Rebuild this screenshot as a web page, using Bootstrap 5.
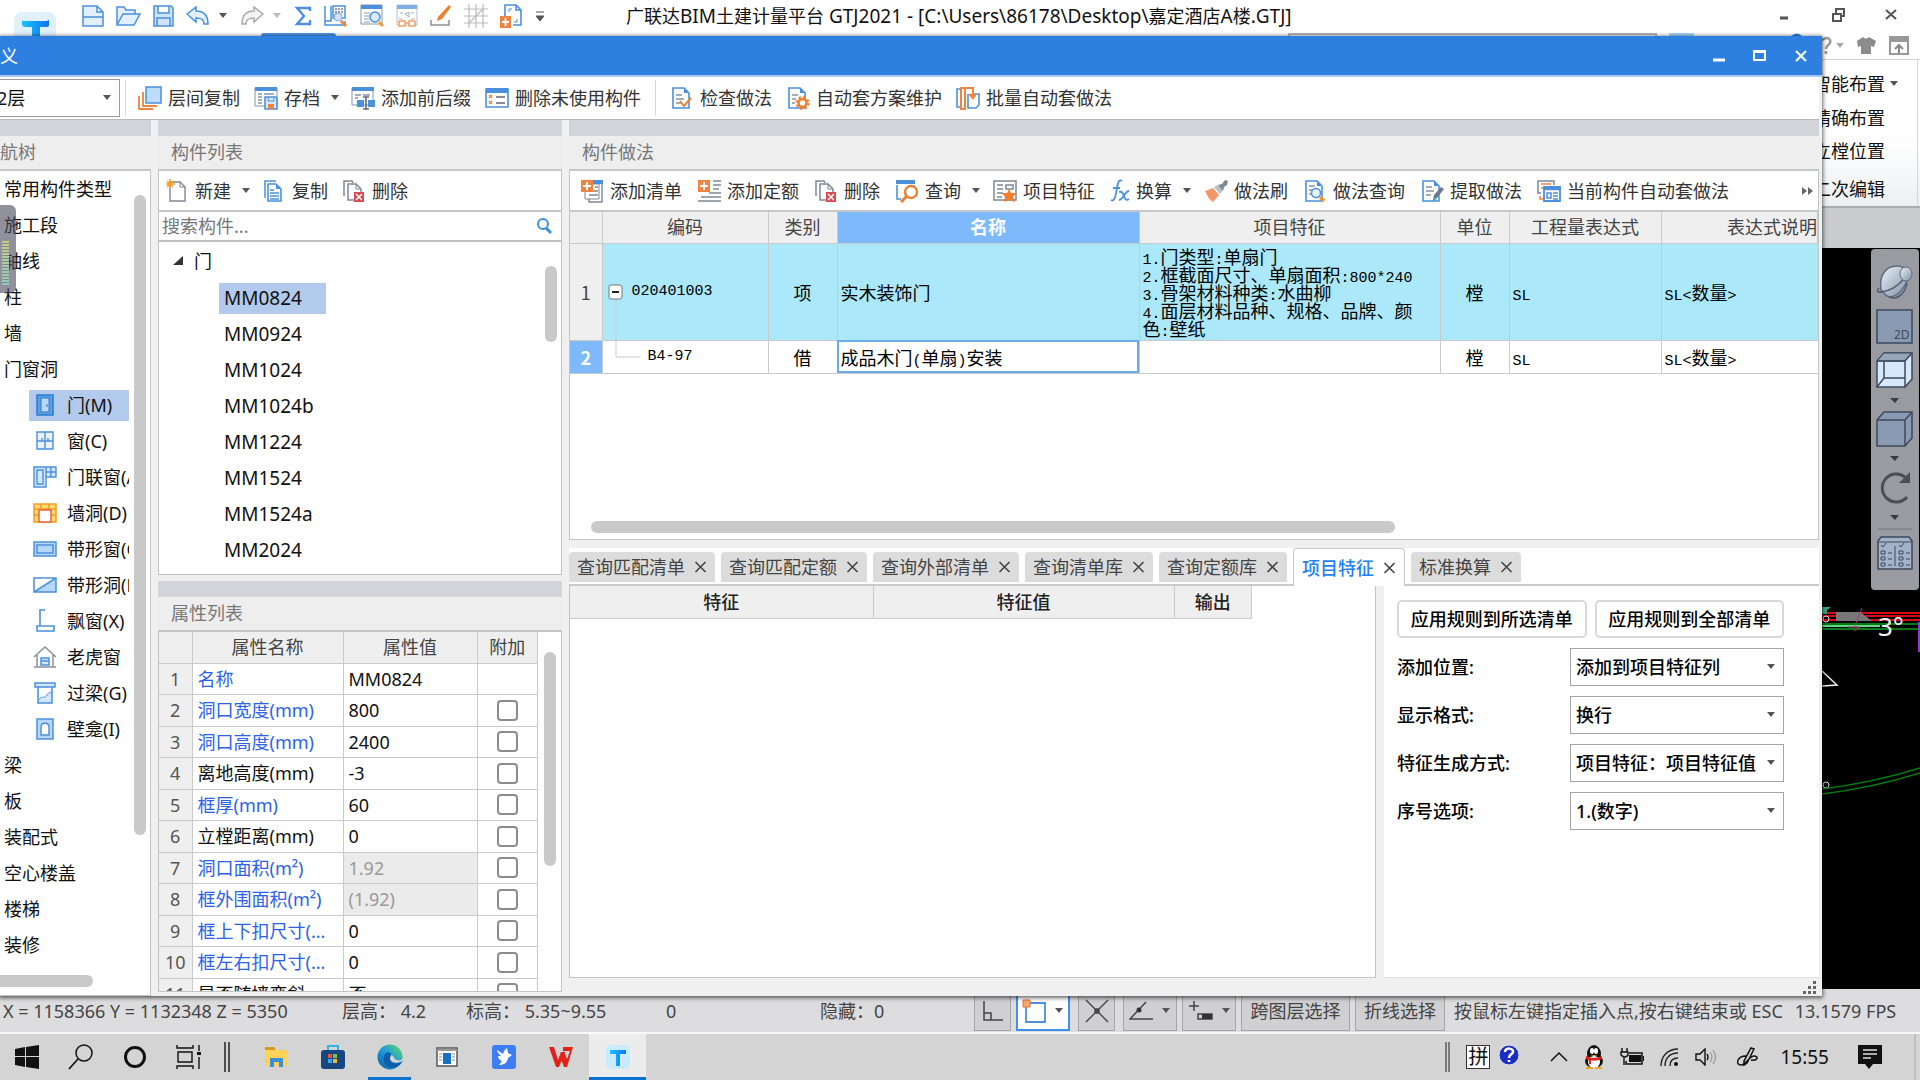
<!DOCTYPE html>
<html lang="zh-CN">
<head>
<meta charset="utf-8">
<meta name="viewport" content="width=device-width, initial-scale=1">
<title>广联达BIM土建计量平台 GTJ2021</title>
<link rel="stylesheet" href="https://cdn.jsdelivr.net/npm/bootstrap@5.3.0/dist/css/bootstrap.min.css">
<style>
:root{--line:#c3c4c6;--face:#efefef;--band:#d2d4d9;--sel:#b2caeb;--thumb:#c9c9c9;--blue:#2d7fe0}
body{font-family:"Noto Sans","Noto Sans CJK SC",sans-serif;font-size:18px;line-height:24px;color:#111;height:100vh;overflow:hidden;background:#000}
svg{display:block;flex:none}
button{font:inherit;color:inherit;background:none;border:0;padding:0}
ul{list-style:none;margin:0;padding:0}
.minw{min-width:0}.minh{min-height:0}
/* main window */
.app-top{height:60px;background:#fff;border-bottom:1px solid #d0d0d0}
.app-title{left:626px;top:4px;font-size:18px;white-space:nowrap}
.app-title span{font-size:19px}
.quick{padding-left:82px;height:31px;gap:12px}
.app-logo{left:14px;top:12px}
.ribbon-tab{left:261px;top:33px;width:75px;height:8px;background:#4d95e2;border-radius:3px}
.ribbon{height:148px;background:linear-gradient(#fff,#fdfdfd 60%,#eceff1);border-bottom:2px solid #a9abb0}
.ribbon-group{width:109px;margin-right:2px;padding-top:7px;border-right:1px solid #d5d8db}
.ribbon-group button{height:35px;white-space:nowrap;padding-left:4px}
.optionbar{height:40px;background:#c9cbcf}
.canvas{background:#000}
.viewtools{width:48px;top:1px;right:1px;height:341px;background:#999ba1;border-radius:4px;padding-top:15px}
/* dialog */
.dlg{left:0;right:98px;top:36px;bottom:84px;background:#f0f0f0;box-shadow:0 1px 4px 1px rgba(0,0,0,.6);z-index:5;overflow:hidden}
.dlg-title{height:41px;background:var(--blue);color:#fff;border-bottom:2px solid #a8c8f0}
.dlg-controls{gap:27px;padding-right:14px}
.dlg-body{padding-right:3px}
.tools{gap:14px;background:#fff;color:#333;white-space:nowrap}
.tools button{display:flex;align-items:center;gap:6px}
.tools .drop{margin:0 -3px 0 4px}
.main-tools{height:43px;border-bottom:1px solid #b9babd}
.floor{width:123px;height:38px;border:1px solid #9a9a9a;border-left:0;border-radius:0;padding:0;margin-left:-3px;margin-right:3px;font-size:18px;line-height:24px;color:#111;background-color:#fff;background-position:right 7px center;background-size:10px 6px}
.vsep{width:1px;height:36px;background:#d8d8d8}
.vsep.first{margin:0 -2px 0 -12px}
.caret{background-image:url("data:image/svg+xml,%3Csvg xmlns='http://www.w3.org/2000/svg' viewBox='0 0 10 6'%3E%3Cpath d='M1 0h8L5 5z' fill='%23555'/%3E%3C/svg%3E")}
.band{height:16px;background:var(--band)}
.band.lower{margin-top:6px}
.pane-head{height:35px;background:#eee;color:#777;border-bottom:2px solid #c6c7c9;line-height:33px;padding-left:13px}
.pane{border:1px solid var(--line);border-top:0;background:#fff}
.col-nav{width:151px}
.col-list{width:404px;margin:0 7px}
.pane-tools{height:41px;border-bottom:2px solid #c6c7c9;padding-left:6px}
.right-tools{gap:15px;padding-left:10px}
.navtree li{height:36px;padding-left:4px;white-space:nowrap;display:flex;align-items:center}
.navtree .sub{padding-left:29px}
.navtree .sub button{width:100px;height:31px;overflow:hidden;display:flex;align-items:center;gap:10px;padding-left:4px}
.picked{background:var(--sel)}
.thumb-v{width:12px;border-radius:6px;background:var(--thumb)}
.thumb-h{height:12px;border-radius:6px;background:var(--thumb)}
.find{height:30px;border-bottom:2px solid #c0c1c3}
.find input{border:0;outline:0;background:none;padding:0 3px;font-size:18px;width:340px}
.find input::placeholder{color:#777;opacity:1}
.list-pane{height:363px}
.root-item{height:38px;gap:10px;padding-left:13px}
.items li{height:36px;display:flex;align-items:center;padding-left:60px;font-size:19px}
.items button{padding:0 5px;height:31px;min-width:107px;text-align:left}
.grid{table-layout:fixed;border-collapse:collapse;width:100%}
.grid th{background:var(--face);font-weight:400;color:#444;text-align:center}
.grid th,.grid td{border:1px solid #c9cacc;border-top:0;padding:0;white-space:nowrap;overflow:hidden}
.grid tr>:first-child{border-left:0}
.props tr{height:31px}.props tbody tr:nth-child(even){height:32px}
.props td{padding-left:5px;line-height:24px}
.props tbody th{color:#555}
.props .tick{padding:0;text-align:center}
.props .k{color:#2b62e8;text-overflow:ellipsis}.props .off{background:#ebebeb;color:#999}
.props input{display:block;appearance:none;width:21px;height:21px;margin:0 auto;border:2px solid #8c8c8c;border-radius:4px;background:#fff}
.bill{font-family:"Noto Sans CJK SC",sans-serif;color:#000}
.bill thead th{height:31px;font-family:"Noto Sans","Noto Sans CJK SC",sans-serif}
.bill td{padding-left:3px;line-height:18px}
.bill .lat{font-family:"Liberation Mono",monospace;font-size:15px;line-height:1px}
.bill .line1{height:97px}.bill .line1 td{background:#abe8fa}
.bill .line2{height:33px}
.bill thead .hot,.bill tbody .hot{background:#7db9fb;color:#fff;font-weight:700}
.bill .editing{outline:2px solid #6aa9ea;outline-offset:-2px}
.bill-pane{height:328px}
.bill-thumb{width:804px;margin:0 0 6px 21px}
.tabs{height:38px;gap:6px;margin-top:8px;border-bottom:2px solid #c8c9cb;background:#fff}
.tabs button{height:30px;margin-bottom:2px;padding:0 8px;background:#dcdcdc;color:#444;border-radius:4px 4px 0 0;display:flex;align-items:center;gap:9px;white-space:nowrap}
.tabs .now{height:38px;margin-bottom:-2px;background:#fff;color:#2381f0;border:1px solid #c8c9cb;border-bottom:0;font-weight:500}
.feature thead th{height:32px;font-weight:500;color:#222}
.feature{width:682px}
.form-side{width:435px;padding:14px 35px 0 13px;font-weight:500;color:#000}
.form-side .apply{height:38px;border:2px solid #d8d8d8;border-radius:5px;flex:1}
.form-side .pick{width:214px;height:38px;border:1px solid #a5a5a5;border-radius:0;padding:0 20px 0 5px;font-size:18px;font-weight:500;color:#000;background-color:#fff;background-position:right 7px center;background-size:10px 6px}
.form-rows{gap:10px;margin-top:10px}
.grip{height:18px}
/* status bar and taskbar */
.status{height:45px;background:#dddddf;color:#444;border-bottom:2px solid #f8f8f8;white-space:nowrap;padding-left:3px}
.status button{height:41px;border:1px solid #a5a5a5;background:#d0d0d2;margin-right:5px;display:flex;align-items:center;justify-content:center;gap:8px}
.status .on{background:#fff;border:2px solid #3d92ee}
.s-xyz{width:339px}.s-floor{width:124px}.s-level{width:200px}.s-num{width:154px}.s-hid{width:154px}
.status .b-one{width:37px}.status .b-two{width:54px}.status .b-layer{width:109px}.status .b-line{width:90px}
.taskbar{height:46px;background:#d4d4d4;color:#111}
.tb{width:57px;height:46px;display:flex;align-items:center;justify-content:center;position:relative}
.tb.nar{width:54px}
.tb.live{background:#ececec}
.tb.live::after,.tb.run::after{content:"";position:absolute;bottom:0;left:7px;right:7px;height:3px;background:#0f72cf}
.tb.live::after{left:0;right:0}
.tray{gap:16px;padding-right:4px}
.help{margin:-4px 14px 0 -8px}
.ime{width:24px;height:24px;border:1px solid #333;background:#fff;font-size:20px;line-height:21px;text-align:center}
.clock{font-size:19px;margin:0 13px 0 5px}
.handle{left:0;top:169px;width:16px;height:88px;background:rgba(70,72,90,.6);border-radius:0 6px 6px 0;padding:36px 7px 8px 2px}
.handle div{height:44px;background:repeating-linear-gradient(transparent 0 2px,#85878f 2px 3px),linear-gradient(#c9cc8a,#8fcbbb)}
</style>
<script src="https://cdn.jsdelivr.net/npm/bootstrap@5.3.0/dist/js/bootstrap.bundle.min.js"></script>
</head>
<body class="d-flex flex-column position-relative">

<svg width="0" height="0" class="position-absolute" aria-hidden="true">
<defs>
<linearGradient id="gT" x1="0" x2="1"><stop offset="0" stop-color="#19c3ff"/><stop offset="1" stop-color="#1173f0"/></linearGradient>
<linearGradient id="gE" x1="0" y1="1" x2="1" y2="0"><stop offset="0" stop-color="#0c59a4"/><stop offset=".5" stop-color="#1c9ade"/><stop offset="1" stop-color="#6bdc5a"/></linearGradient>
<linearGradient id="gS" x1="0" y1="0" x2="1" y2="1"><stop offset="0" stop-color="#eef3f8"/><stop offset="1" stop-color="#7f8fa6"/></linearGradient>
<symbol id="arrow" viewBox="0 0 10 6"><path d="M1 0h8L5 5z" fill="#555"/></symbol>
<symbol id="close" viewBox="0 0 12 12"><path d="M1 1l10 10M11 1L1 11" stroke="currentColor" stroke-width="1.6"/></symbol>
<symbol id="layers" viewBox="0 0 24 24"><path d="M8 1h15v16H8z" fill="#bedcfb" stroke="#4b90dc" stroke-width="1.5"/><path d="M5 6v14h14M1 10v13h14" fill="none" stroke="#ee8440" stroke-width="1.8"/></symbol>
<symbol id="archive" viewBox="0 0 24 24"><path d="M1 2h22v18H1z" fill="#fff" stroke="#8494a5"/><path d="M1 1h22v4H1z" fill="#4b90dc"/><path d="M4 8h4M4 11h4M4 14h4M4 17h4M10 8h10" stroke="#8494a5" stroke-width="1.4"/><path d="M11 11h11l1 1v11H11z" fill="#d8eafe" stroke="#4b90dc" stroke-width="1.6"/><path d="M14 11v4h6v-4" fill="none" stroke="#4b90dc"/><path d="M14 18h6v5h-6z" fill="#ee8440"/></symbol>
<symbol id="affix" viewBox="0 0 24 24"><path d="M1 2h21v17H1z" fill="#fff" stroke="#8494a5"/><path d="M1 1h22v4H1z" fill="#4b90dc"/><path d="M4 9h6M12 9h7M4 12h3" stroke="#8494a5" stroke-width="1.4"/><path d="M6 14h7v7H6zM17 14h7v7h-7z" fill="#4b90dc"/><path d="M12 11h6M15 11v12M12 23h6" stroke="#5b6b7b" stroke-width="1.6"/></symbol>
<symbol id="unused" viewBox="0 0 24 24"><path d="M1 3h22v18H1z" fill="#fff" stroke="#4b90dc" stroke-width="1.6"/><path d="M1 2h22v5H1z" fill="#4b90dc"/><path d="M4 9l3 3M7 9l-3 3M4 15l3 3M7 15l-3 3" stroke="#ee8440" stroke-width="1.4"/><path d="M11 11h9M11 17h9" stroke="#667" stroke-width="1.6"/></symbol>
<symbol id="doc" viewBox="0 0 24 24"><path d="M3 2h11l5 5v15H3z" fill="#fff" stroke="#4b90dc" stroke-width="1.6"/><path d="M14 2v5h5z" fill="#4b90dc"/></symbol>
<symbol id="doccheck" viewBox="0 0 24 24"><use href="#doc"/><path d="M6 9h6M6 13h8M6 17h5" stroke="#8494a5" stroke-width="1.4"/><path d="M10 15l4 5 7-8" fill="none" stroke="#f07f30" stroke-width="2"/></symbol>
<symbol id="docgear" viewBox="0 0 24 24"><use href="#doc"/><path d="M6 9h6M6 13h4M6 17h3" stroke="#8494a5" stroke-width="1.4"/><circle cx="16.500" cy="17" r="4" fill="#fff" stroke="#f07f30" stroke-width="2.600"/><circle cx="16.500" cy="17" r="6" fill="none" stroke="#f07f30" stroke-width="2" stroke-dasharray="2.400 2.300"/></symbol>
<symbol id="batch" viewBox="0 0 24 24"><path d="M1 3h5v18H1zM14 8h9v11l-3 3h-8V8" fill="#fff" stroke="#4b90dc" stroke-width="1.600"/><path d="M5 2h4v21H5zM9 2h8v8" fill="#fff" stroke="#ee8440" stroke-width="2"/><path d="M12 8h9l-4 6z" fill="#ee8440"/></symbol>
<symbol id="newdoc" viewBox="0 0 24 24"><path d="M5 3h10l5 5v14H5z" fill="#fff" stroke="#7d8894" stroke-width="1.4"/><path d="M15 3v5h5" fill="none" stroke="#7d8894"/><path d="M5 0v9M1 5h9M2 2l6 6M8 2L2 8" stroke="#f0a030" stroke-width="1.5"/></symbol>
<symbol id="copy" viewBox="0 0 24 24"><path d="M3 19V2h11" fill="none" stroke="#4b90dc" stroke-width="1.5"/><path d="M6 5h8l5 5v12H6z" fill="#fff" stroke="#4b90dc" stroke-width="1.600"/><path d="M14 5v5h5z" fill="#4b90dc"/><path d="M8 11h4M8 14h9M8 17h9M8 20h9" stroke="#4b90dc" stroke-width="1.300"/></symbol>
<symbol id="del" viewBox="0 0 24 24"><path d="M2 17V2h8l1 2" fill="none" stroke="#7d8894" stroke-width="1.500"/><path d="M6 5h8l5 5v11H6z" fill="#fff" stroke="#7d8894" stroke-width="1.500"/><path d="M14 5v5h5" fill="none" stroke="#7d8894"/><path d="M12 13h10v10H12z" fill="#d9484c"/><path d="M14 15l6 6M20 15l-6 6" stroke="#fff" stroke-width="1.500"/></symbol>
<symbol id="addlist" viewBox="0 0 24 24"><path d="M5 5h14v15H5z" fill="#fff" stroke="#7d8894"/><path d="M12 1h11v4H12z" fill="#4b90dc"/><path d="M22 5v18H9v-3M9 12h9M9 16h9M15 8h3" fill="none" stroke="#7d8894" stroke-width="1.400"/><path d="M1 1h12v12H1z" fill="#ee8440"/><path d="M7 3v8M3 7h8" stroke="#fff" stroke-width="2"/></symbol>
<symbol id="addquota" viewBox="0 0 24 24"><path d="M16 2h8M16 6h8M16 10h6M12 14h12M4 18h20M1 22h23" stroke="#7d8894" stroke-width="1.500"/><path d="M1 1h12v12H1z" fill="#ee8440"/><path d="M7 3v8M3 7h8" stroke="#fff" stroke-width="2"/></symbol>
<symbol id="query" viewBox="0 0 24 24"><path d="M2 6v14h4M19 6v2" fill="none" stroke="#4b90dc" stroke-width="1.600"/><path d="M1 1h19v4H1z" fill="#4b90dc"/><circle cx="16" cy="13" r="6" fill="#fff" stroke="#f07f30" stroke-width="2.400"/><path d="M12 17l-6 6" stroke="#f07f30" stroke-width="3"/></symbol>
<symbol id="feat" viewBox="0 0 24 24"><path d="M1 2h22v19H1z" fill="#fff" stroke="#7d8894" stroke-width="1.500"/><path d="M4 6h6M4 10h6M4 14h6M4 18h5M13 6h7v4h-7z" fill="none" stroke="#7d8894" stroke-width="1.500"/><path d="M16 10l2 4 5 0-3 4 2 5-6-2-5 2 1-5-3-4 5 0z" fill="#f07f30"/></symbol>
<symbol id="fx" viewBox="0 0 20 24"><path d="M12 2c-3-2-4 1-5 7s-2 14-6 12M3 9h7M9 13c3-1 4 1 5 4s2 5 5 3M19 12c-4 0-6 9-10 9" fill="none" stroke="#4b90dc" stroke-width="1.800"/></symbol>
<symbol id="brush" viewBox="0 0 24 24"><path d="M1 12l8-3 6 7-6 7c-3-2-6-6-8-11z" fill="#f6976a"/><path d="M10 8l4-2 5 5-3 4z" fill="#b9c0c7"/><path d="M14 6l4-1 3-4 3 1-1 4-3 2-1 4z" fill="#7d8894"/></symbol>
<symbol id="docfind" viewBox="0 0 24 24"><use href="#doc"/><path d="M6 7h6M6 11h3M6 15h3" stroke="#8494a5" stroke-width="1.400"/><circle cx="13" cy="14" r="4.500" fill="#e5f1ff" stroke="#4b90dc" stroke-width="1.500"/><path d="M17 18l4 4" stroke="#f0962c" stroke-width="3.500"/></symbol>
<symbol id="docpen" viewBox="0 0 24 24"><use href="#doc"/><path d="M6 8h6M6 12h8M6 16h5" stroke="#8494a5" stroke-width="1.400"/><path d="M13 21l1-5 7-8 3 2-7 9z" fill="#687a8c"/><path d="M12 23l2-4 3 1z" fill="#35b3ae"/></symbol>
<symbol id="auto" viewBox="0 0 24 24"><path d="M4 14H1V2h16v4" fill="#fff" stroke="#7d8894" stroke-width="1.500"/><path d="M4 5h10M4 9h3M3 17v3h3" fill="none" stroke="#ee8440" stroke-width="1.500"/><path d="M7 8h16v14H7z" fill="#fff" stroke="#4b90dc" stroke-width="1.800"/><path d="M7 10h16" stroke="#4b90dc" stroke-width="2.500"/><path d="M10 14h4v5h-4zM16 14h5M16 17h5M16 20h5" fill="none" stroke="#4b90dc" stroke-width="1.500"/></symbol>
<symbol id="door" viewBox="0 0 24 24"><path d="M4 2h16v20H4z" fill="#5b9fe6" stroke="#2e7bce" stroke-width="1.500"/><path d="M8 5h8v14H8z" fill="#b9d8f8" stroke="#2e7bce"/><path d="M14 11v3" stroke="#2e7bce"/></symbol>
<symbol id="win" viewBox="0 0 24 24"><path d="M4 3h16v17H4zM12 3v17M4 12h16M9 9v3M15 9v3" fill="#e9f3fe" stroke="#4b90dc" stroke-width="1.400"/></symbol>
<symbol id="doorwin" viewBox="0 0 24 24"><path d="M1 2h12v20H1zM13 2h10v10H13zM18 2v10M13 7h10M4 5h6v14H4z" fill="#d3e7fc" stroke="#4b90dc" stroke-width="1.400"/></symbol>
<symbol id="hole" viewBox="0 0 24 24"><path d="M1 3h22v18H1z" fill="#ffd77b" stroke="#f0a020" stroke-width="1.500"/><path d="M1 8h22M8 3v5M16 3v5M1 14h5M18 14h5" stroke="#f0a020" stroke-width="1.500"/><path d="M6 9h12v12H6z" fill="#fff" stroke="#e8653a" stroke-width="1.500"/></symbol>
<symbol id="strip" viewBox="0 0 24 24"><path d="M1 5h22v14H1zM4 8h16v8H4z" fill="#b7d7f8" stroke="#4b90dc" stroke-width="1.500"/></symbol>
<symbol id="striphole" viewBox="0 0 24 24"><path d="M1 5h22v14H1z" fill="#fff"/><path d="M23 5v14H1z" fill="#b7d7f8"/><path d="M1 5h22v14H1zM1 19L23 5" fill="none" stroke="#4b90dc" stroke-width="1.500"/></symbol>
<symbol id="bay" viewBox="0 0 24 24"><path d="M12 1H7v16M4 17h17v5H4z" fill="none" stroke="#4b90dc" stroke-width="1.600"/></symbol>
<symbol id="dormer" viewBox="0 0 24 24"><path d="M1 12L12 2l11 10M4 10v12M20 10v12M1 22h22" fill="none" stroke="#8c9196" stroke-width="1.500"/><path d="M8 13h8v7H8zM8 16h8" fill="#d3e7fc" stroke="#4b90dc" stroke-width="1.500"/></symbol>
<symbol id="lintel" viewBox="0 0 24 24"><path d="M2 2h20v4H2zM5 6h14v16H5z" fill="#d3e7fc" stroke="#4b90dc" stroke-width="1.500"/><path d="M6 20c2-6 5-1 7-5s3-3 5-4V7H6z" fill="#fff"/><path d="M6 19c2-5 5-1 7-4s3-3 5-4" fill="none" stroke="#4b90dc"/></symbol>
<symbol id="niche" viewBox="0 0 24 24"><path d="M4 2h16v20H4z" fill="#b7d7f8" stroke="#4b90dc" stroke-width="1.500"/><path d="M8 18v-8c0-5 8-5 8 0v8z" fill="#fff" stroke="#4b90dc" stroke-width="1.400"/></symbol>
</defs>
</svg>

<!-- main window -->
<header class="app-top position-relative d-flex justify-content-between">
  <svg class="app-logo position-absolute" width="42" height="30" viewBox="0 0 42 30"><rect width="42" height="42" rx="8" fill="#e1f1fb"/><path d="M8 9q0-1 2 0h23q2-2 2 0v4q0 2-3 2h-6v15h-8V15h-7q-3 0-3-3z" fill="url(#gT)"/></svg>
  <div class="ribbon-tab position-absolute"></div>
  <div class="quick d-flex align-items-center">
    <svg width="22" height="22" viewBox="0 0 22 22"><path d="M1 1h14l6 6v14H1zM15 1v6h6M1 12h20" fill="#e2effd" stroke="#4b90dc" stroke-width="1.500"/></svg>
    <svg width="25" height="22" viewBox="0 0 25 22"><path d="M1 20V2h7l2 3h9v4M1 20l6-11h17l-6 11z" fill="#e2effd" stroke="#4b90dc" stroke-width="1.500"/></svg>
    <svg width="21" height="22" viewBox="0 0 21 22"><path d="M1 1h17l2 2v18H1zM5 1v7h11V1M4 13h13v8H4z" fill="#cfe4fb" stroke="#4b90dc" stroke-width="1.500"/></svg>
    <svg width="24" height="20" viewBox="0 0 24 20"><path d="M1 8l9-7v4c9 0 12 5 12 13h-4c0-5-3-6-8-6v4z" fill="#e2effd" stroke="#4b90dc" stroke-width="1.500"/></svg>
    <svg class="ms-n1" width="6" height="6" viewBox="0 0 6 6" overflow="visible"><path d="M-3 0h8L1 5z" fill="#555"/></svg>
    <svg width="24" height="20" viewBox="0 0 24 20"><path d="M23 8l-9-7v4C5 5 2 10 2 18h4c0-5 3-6 8-6v4z" fill="#f4f4f4" stroke="#aaa" stroke-width="1.500"/></svg>
    <svg width="6" height="6" viewBox="0 0 6 6" overflow="visible"><path d="M-3 0h8L1 5z" fill="#bbb"/></svg>
    <svg width="18" height="20" viewBox="0 0 18 20"><path d="M16 5V2H3l7 8-7 8h13v-4" fill="none" stroke="#4b90dc" stroke-width="2.400"/></svg>
    <svg width="24" height="24" viewBox="0 0 24 24"><path d="M1 2v19h20v-4M1 17h6V2M9 2h12v12H9z" fill="#fff" stroke="#4b90dc" stroke-width="1.500"/><path d="M11 5h8M11 8h8" stroke="#99a" stroke-dasharray="2 1" stroke-width="2"/><circle cx="14" cy="13" r="4" fill="#cfe4fb" stroke="#78a8dd"/><path d="M17 17l5 5" stroke="#ee8440" stroke-width="3"/></svg>
    <svg width="24" height="24" viewBox="0 0 24 24"><path d="M1 1h21v19H1z" fill="#fff" stroke="#8494a5"/><path d="M1 1h21v4H1z" fill="#4b90dc"/><path d="M4 9h6M4 12h5M4 15h5M4 18h6" stroke="#89a"/><circle cx="15" cy="13" r="5" fill="#dcebfc" stroke="#4b90dc" stroke-width="1.500"/><path d="M19 18l4 4" stroke="#f0a030" stroke-width="3"/></svg>
    <svg width="22" height="24" viewBox="0 0 22 24"><path d="M1 1h20v20H1z" fill="#fff" stroke="#b5c0cc"/><path d="M1 1h20v4H1z" fill="#7fb1e8"/><path d="M4 9h3M15 9h3M9 10l4-2v5zM3 14l4 2M19 14l-4 2" fill="none" stroke="#a3afbb"/><path d="M3 17h6v5H3zM13 17h6v5h-6zM9 19h4" fill="#fff" stroke="#f3a36c" stroke-width="1.600"/></svg>
    <svg width="22" height="24" viewBox="0 0 22 24"><path d="M8 13L19 1l2 2-9 12-5 2z" fill="#f07f30"/><path d="M1 16v5h18v-5" fill="none" stroke="#8c9196" stroke-width="1.500"/></svg>
    <svg width="24" height="24" viewBox="0 0 24 24"><path d="M0 5h24M0 12h24M0 19h24M5 0v24M12 0v24M19 0v24M5 19L19 5" stroke="#bbb" stroke-width="1.200" fill="none"/></svg>
    <svg width="23" height="24" viewBox="0 0 23 24"><path d="M5 12V1h11l5 5v15h-8M16 1v5h5" fill="#fff" stroke="#4b90dc" stroke-width="1.600"/><path d="M9 5v3M9 5h3M17 18v-3M17 18h-3" stroke="#4b90dc"/><path d="M0 12h11v12H0z" fill="#ee8440"/><path d="M5.500 14v8M2 18h7" stroke="#fff" stroke-width="1.800"/></svg>
    <svg width="10" height="12" viewBox="0 0 10 12"><path d="M1 2h8M1 6h8L5 11z" fill="#555" stroke="#555"/></svg>
  </div>
  <div class="app-title position-absolute">广联达<span>BIM</span>土建计量平台<span> GTJ2021 - [C:\Users\86178\Desktop\</span>嘉定酒店<span>A</span>楼<span>.GTJ]</span></div>
  <svg width="640" height="60" viewBox="1280 0 640 60"><path d="M1289 50V34h367v16" fill="none" stroke="#b5b5b5" stroke-width="2"/><path d="M1669 33h25v6h-25z" fill="#a8d8fa"/><g fill="none" stroke="#555" stroke-width="2"><path d="M1780 18h8" stroke-width="3"/><path d="M1833 14h8v7h-8zM1836 13V9h8v7h-3M1886 10l10 9M1896 10l-10 9"/></g><path d="M1791 36q6-5 11 0z" fill="#2d7fe0"/><path d="M1822 40q6-4 8 0c2 5-4 4-4 9M1826 51v3" stroke="#999" stroke-width="2.500" fill="none"/><path d="M1836 43h8l-4 5z" fill="#aaa"/><path d="M1857 41l6-4q3 3 6 0l7 4-2 6-3-1v8h-10v-8l-3 1z" fill="#8c8c8c"/><path d="M1890 37h18v17h-18z" fill="none" stroke="#999" stroke-width="2"/><path d="M1890 37h18v5h-18z" fill="#999"/><path d="M1899 53v-8M1895 49l4-4 4 4" fill="none" stroke="#888" stroke-width="2"/></svg>
</header>
<section class="ribbon d-flex justify-content-end">
  <div class="ribbon-group d-flex flex-column align-items-start">
    <button class="d-flex align-items-center gap-1">智能布置<svg width="10" height="6"><use href="#arrow"/></svg></button>
    <button>精确布置</button>
    <button>立樘位置</button>
    <button class="mt-1">二次编辑</button>
  </div>
</section>
<div class="optionbar"></div>
<main class="canvas flex-fill minh position-relative">
  <svg class="position-absolute end-0 top-0" width="98" height="741" viewBox="1822 248 98 741">
    <path d="M1822 613h98M1822 616h98M1822 620h98" stroke="#d40a14" stroke-width="2"/>
    <path d="M1836 612h24l12 9h-36z" fill="#777"/>
    <path d="M1822 624h98M1822 629h98" stroke="#067a12" stroke-width="2"/><path d="M1822 626h58" stroke="#63d884" stroke-width="2"/>
    <path d="M1822 607h9l-4 3v4h-5" fill="#38a97b"/><path d="M1862 608l-8 20M1848 627h12l-6 4" stroke="#a33f76" fill="none"/>
    <circle cx="1826" cy="619" r="3" fill="none" stroke="#ddd"/><circle cx="1826" cy="785" r="3" fill="none" stroke="#ddd"/>
    <path d="M1919 622v30" stroke="#8a3ae0" stroke-width="2"/>
    <path d="M1822 671l15 14-15 1" fill="none" stroke="#eee" stroke-width="1.500"/>
    <path d="M1822 789q50-6 98-21M1822 794q50-6 98-21" fill="none" stroke="#0a7a14" stroke-width="1.500"/>
    <text x="1878" y="636" fill="#f2f2f2" font-size="26" font-family="Noto Sans">3°</text>
  </svg>
  <aside class="viewtools position-absolute">
    <svg width="48" height="326" viewBox="1871 264 48 326" stroke="#3e4a5c" fill="none">
      <path d="M1881 290c-2-14 4-24 16-24 10 0 13 8 9 17s-12 16-19 13z" fill="url(#gS)" stroke="#5c6b80" stroke-width="1.500"/><ellipse cx="1906" cy="274" rx="6" ry="7" fill="url(#gS)" stroke="#5c6b80"/><path d="M1879 288q-4 5 2 4c10-1 16-6 22-12M1889 297c6 3 16-1 18-14" stroke-width="1.500" stroke="#4c5a6e"/>
      <path d="M1877 310h35v33h-35z" fill="#8a9ab2" stroke-width="1.500"/><text x="1894" y="339" font-size="12" fill="#3e4a5c" stroke="none" font-family="Noto Sans">2D</text>
      <path d="M1877 361l7-8h28v26l-7 8h-28z" fill="#d7e8fd" stroke-width="1.500"/><path d="M1877 361l7-8h28l-7 8z" fill="#97a5b9"/><path d="M1905 361v26M1884 362v16h21M1884 378l-7 9M1905 361l7-8M1877 361h28" stroke-width="1.500"/>
      <path d="M1877 420l7-8h28v26l-7 8h-28z" fill="#8a9ab2" stroke-width="1.500"/><path d="M1877 420h28v26M1905 420l7-8" stroke-width="1.500"/>
      <path d="M1890 398h9l-4 5zM1890 456h9l-4 5zM1890 515h9l-4 5z" fill="#333c48" stroke="none"/>
      <path d="M1905 477a14 14 0 1 0 2 20" stroke="#4b4e54" stroke-width="3"/><path d="M1910 472v11h-11z" fill="#4b4e54" stroke="none"/>
      <path d="M1878 529h34" stroke="#777"/>
      <path d="M1878 541l3-4h28l3 4v28h-34z" fill="#a3b2c8" stroke-width="1.500"/><path d="M1878 542h34M1895 546v20M1881 545l2 2 3-4M1899 545l2 2 3-4M1881 551h4v3h-4zM1881 557h4v3h-4zM1881 563h4v3h-4zM1899 551h4v3h-4zM1899 557h4v3h-4zM1899 563h4v3h-4zM1888 553h4M1888 559h4M1888 565h4M1906 553h4M1906 559h4M1906 565h4"/>
    </svg>
  </aside>
</main>
<footer class="status d-flex align-items-center">
  <span class="s-xyz">X = 1158366 Y = 1132348 Z = 5350</span>
  <span class="s-floor">层高： 4.2</span>
  <span class="s-level">标高： 5.35~9.55</span>
  <span class="s-num">0</span>
  <span class="s-hid">隐藏：0</span>
  <button class="b-one" aria-label="正交"><svg width="22" height="22" viewBox="0 0 22 22"><path d="M2 1v19h19M2 13h7v7" fill="none" stroke="#444" stroke-width="1.500"/></svg></button>
  <button class="on b-two me-2" aria-label="捕捉"><svg width="24" height="24" viewBox="0 0 24 24"><path d="M4 4h19v19H4z" fill="none" stroke="#4b8fe0" stroke-width="1.800"/><path d="M1 1h7v7H1z" fill="#f7a873" stroke="#e0772f"/></svg><svg width="10" height="6"><use href="#arrow"/></svg></button>
  <button class="b-one me-2" aria-label="交点"><svg width="24" height="24" viewBox="0 0 24 24"><path d="M1 1l22 22M23 1L1 23M10 10h4v4h-4z" fill="none" stroke="#444" stroke-width="1.400"/></svg></button>
  <button class="b-two" aria-label="角度"><svg width="24" height="22" viewBox="0 0 24 22"><path d="M17 2L1 19h23" fill="none" stroke="#444" stroke-width="1.500"/><circle cx="10" cy="10" r="2.500" fill="#333"/></svg><svg width="10" height="6"><use href="#arrow"/></svg></button>
  <button class="b-two" aria-label="偏移"><svg width="25" height="22" viewBox="0 0 25 22"><path d="M6 1v10M1 6h10M10 14h14v5H10z" fill="none" stroke="#444" stroke-width="1.500"/><path d="M14 14h10v5H14z" fill="#333"/></svg><svg width="10" height="6"><use href="#arrow"/></svg></button>
  <button class="b-layer">跨图层选择</button>
  <button class="b-line">折线选择</button>
  <span class="ps-1">按鼠标左键指定插入点,按右键结束或 ESC</span><span class="ms-2 ps-1">13.1579 FPS</span>
</footer>
<nav class="taskbar d-flex align-items-center">
  <button class="tb nar" aria-label="开始"><svg width="24" height="24" viewBox="0 0 24 24"><path d="M0 4l10-2v9H0zM11 2l13-2v11H11zM0 12h10v10L0 20zM11 12h13v12l-13-2z" fill="#111"/></svg></button>
  <button class="tb nar" aria-label="搜索"><svg width="26" height="26" viewBox="0 0 26 26"><circle cx="16" cy="9" r="8" fill="none" stroke="#111" stroke-width="1.500"/><path d="M10 15L1 25" stroke="#111" stroke-width="1.800"/></svg></button>
  <button class="tb nar" aria-label="助手"><svg width="24" height="24" viewBox="0 0 24 24"><circle cx="12" cy="12" r="9.500" fill="none" stroke="#111" stroke-width="3"/></svg></button>
  <button class="tb nar" aria-label="任务视图"><svg width="26" height="24" viewBox="0 0 26 24"><path d="M1 0v3h16V0M1 24v-3h16v3M2 7h14v10H2zM23 0v6M23 12v12" fill="none" stroke="#111" stroke-width="1.400"/><path d="M21 7h4v3h-4z" fill="#111"/></svg></button>
  <svg width="31" height="30" viewBox="0 0 31 30"><path d="M9 0v30M13 0v30" stroke="#222" stroke-width="1.500"/></svg>
  <button class="tb" aria-label="文件资源管理器"><svg width="24" height="22" viewBox="0 0 24 22"><path d="M1 1h9l2 3h11v16H1z" fill="#ffd35a"/><path d="M1 1h9l2 3H1z" fill="#d9991f"/><path d="M6 21v-9h13v9h-4v-5h-5v5z" fill="#3a8fd8"/></svg></button>
  <button class="tb" aria-label="应用商店"><svg width="24" height="26" viewBox="0 0 24 26"><path d="M7 6V2h10v4" fill="none" stroke="#35b2ea" stroke-width="2"/><rect x="0" y="6" width="24" height="19" rx="3" fill="#17477e"/><path d="M7 10h4v4H7z" fill="#e8553a"/><path d="M12 10h4v4h-4z" fill="#82bd3d"/><path d="M7 15h4v4H7z" fill="#37a6ea"/><path d="M12 15h4v4h-4z" fill="#f4b92c"/></svg></button>
  <button class="tb run" aria-label="浏览器"><svg width="26" height="26" viewBox="0 0 26 26"><circle cx="13" cy="13" r="12.500" fill="url(#gE)"/><path d="M26 16c-3 5-12 4-13-1 0-2 2-3 1-5-2-3-6-2-7 2-2 6 2 11 8 12 5 0 9-3 11-8z" fill="#0f5fa8"/><path d="M25 17c-5 3-12 2-12-3 0-1 1-2 1-3 4 1 3 5 6 5 3 1 5 0 6-2z" fill="#d4d4d4"/></svg></button>
  <button class="tb" aria-label="阅读"><svg width="22" height="20" viewBox="0 0 22 20"><path d="M1 1h20v18H1z" fill="#fff" stroke="#555" stroke-width="1.500"/><path d="M1 2h20v2H1z" fill="#999"/><path d="M7 6h8v11H7z" fill="#1671c4"/><path d="M3 7h3M3 10h3M3 13h3M16 7h3M16 10h3M16 13h3" stroke="#888"/></svg></button>
  <button class="tb" aria-label="飞鸟"><svg width="24" height="24" viewBox="0 0 24 24"><rect width="24" height="24" rx="3" fill="#3d7df6"/><path d="M5 5l6 4c1-3 2-5 4-6l1 5 4 2-4 3c-1 5-4 7-9 7l3-4c-3-1-4-3-4-5l3 0c-2-2-4-4-4-6z" fill="#fff"/></svg></button>
  <button class="tb" aria-label="办公"><svg width="24" height="22" viewBox="0 0 24 22"><path d="M0 1h5l4 13 3-8h4l-6 15H7zM12 13l3-8 3 8 3-8h-7V1h10l-6 20h-3z" fill="#e2231a"/></svg></button>
  <button class="tb live" aria-label="广联达"><svg width="24" height="24" viewBox="0 0 24 24"><rect width="24" height="24" rx="5" fill="#c9ecfd"/><path d="M4 5h16v4h-6v12h-4V9H4z" fill="url(#gT)"/></svg></button>
  <div class="tray ms-auto d-flex align-items-center">
    <svg width="5" height="30"><path d="M1 0v30M4 0v30" stroke="#222"/></svg>
    <div class="ime">拼</div>
    <svg class="help" width="22" height="22" viewBox="0 0 22 22"><circle cx="11" cy="11" r="10" fill="#1a2fc4" stroke="#dfe3f5"/><path d="M7 8c0-5 9-4 8 0-1 3-4 2-4 6M11 16v2" fill="none" stroke="#fff" stroke-width="2.500"/></svg>
    <svg width="18" height="10" viewBox="0 0 18 10"><path d="M1 9l8-8 8 8" fill="none" stroke="#111" stroke-width="1.500"/></svg>
    <svg width="20" height="24" viewBox="0 0 20 24"><ellipse cx="10" cy="9" rx="7" ry="9" fill="#111"/><ellipse cx="10" cy="16" rx="9" ry="7" fill="#111"/><ellipse cx="10" cy="17" rx="6" ry="6" fill="#fff"/><path d="M2 11q8 4 16 0v3q-8 3-11 1v4H5v-4l-3-1z" fill="#e2231a"/><ellipse cx="8" cy="6" rx="2" ry="3" fill="#fff"/><ellipse cx="12" cy="6" rx="2" ry="3" fill="#fff"/><path d="M6 10h8l-4 1zM2 22h7v2H2zM11 22h7v2h-7z" fill="#f5a623"/></svg>
    <svg width="24" height="18" viewBox="0 0 24 18"><path d="M9 5h13v11H6v-3" fill="none" stroke="#111" stroke-width="1.500"/><path d="M9 7h12v7H9zM23 8h1v5h-1z" fill="#111"/><path d="M2 0v4M7 0v4M1 4h7v3q-3 4-7 0zM4 9v8" fill="#d4d4d4" stroke="#111" stroke-width="1.400"/></svg>
    <svg width="19" height="19" viewBox="0 0 19 19"><path d="M1 18C1 8 8 1 18 1M5 18C5 10 10 5 18 5M10 18c0-5 3-8 8-8" fill="none" stroke="#222" stroke-width="1.400"/><circle cx="16" cy="16" r="2" fill="#111"/></svg>
    <svg width="22" height="18" viewBox="0 0 22 18"><path d="M1 6h4l5-5v16l-5-5H1zM12 6q2 3 0 6" fill="none" stroke="#111" stroke-width="1.400"/><path d="M15 4q4 5 0 10M18 2q5 7 0 14" fill="none" stroke="#888"/></svg>
    <svg class="ms-1" width="22" height="20" viewBox="0 0 22 20"><path d="M14 1l3 1-7 14-3 2v-4zM9 9c-9 0-11 9-5 9 5 0 8-9 13-9 5 0 4 5-3 4" fill="none" stroke="#111" stroke-width="1.500"/></svg>
    <time class="clock">15:55</time>
    <svg width="24" height="24" viewBox="0 0 24 24"><path d="M0 0h24v19h-9l-4 5-4-5H0z" fill="#111"/><path d="M5 5h14M5 9h14M5 13h8" stroke="#ddd" stroke-width="1.500"/></svg>
    <svg class="ms-3" width="2" height="46"><path d="M1 0v46" stroke="#aaa"/></svg>
  </div>
</nav>

<!-- definition dialog -->
<div class="dlg position-absolute d-flex flex-column" role="dialog" aria-label="定义">
  <div class="dlg-title d-flex align-items-center justify-content-between flex-shrink-0">
    <span>义</span>
    <div class="dlg-controls d-flex align-items-center">
      <button aria-label="最小化"><svg width="14" height="14" viewBox="0 0 14 14"><path d="M1 11h12" stroke="#fff" stroke-width="3"/></svg></button>
      <button aria-label="最大化"><svg width="14" height="14" viewBox="0 0 14 14"><path d="M1 2h11v9H1zM1 3h11" fill="none" stroke="#fff" stroke-width="2"/></svg></button>
      <button aria-label="关闭"><svg width="14" height="12" viewBox="0 0 12 12"><path d="M1 1l10 10M11 1L1 11" stroke="#fff" stroke-width="2"/></svg></button>
    </div>
  </div>
  <div class="dlg-body flex-fill minh d-flex flex-column">
    <div class="tools main-tools d-flex align-items-center flex-shrink-0">
      <select class="form-select floor caret" aria-label="楼层"><option>2层</option></select>
      <div class="vsep first"></div>
      <button><svg width="24" height="24"><use href="#layers"/></svg>层间复制</button>
      <button><svg width="24" height="24"><use href="#archive"/></svg>存档<svg class="drop" width="10" height="6"><use href="#arrow"/></svg></button>
      <button><svg width="24" height="24"><use href="#affix"/></svg>添加前后缀</button>
      <button><svg width="24" height="24"><use href="#unused"/></svg>删除未使用构件</button>
      <div class="vsep"></div>
      <button><svg width="24" height="24"><use href="#doccheck"/></svg>检查做法</button>
      <button><svg width="24" height="24"><use href="#docgear"/></svg>自动套方案维护</button>
      <button><svg width="24" height="24"><use href="#batch"/></svg>批量自动套做法</button>
    </div>
    <div class="flex-fill minh d-flex">
      <!-- navigation tree -->
      <section class="col-nav flex-shrink-0 d-flex flex-column">
        <div class="band flex-shrink-0"></div>
        <div class="pane-head ps-0 flex-shrink-0">航树</div>
        <div class="pane border-start-0 flex-fill minh d-flex flex-column">
          <div class="d-flex flex-fill minh">
            <ul class="navtree flex-fill minw">
              <li>常用构件类型</li><li>施工段</li><li>轴线</li><li>柱</li><li>墙</li><li>门窗洞</li>
              <li class="sub"><button class="picked"><svg width="24" height="24"><use href="#door"/></svg>门(M)</button></li>
              <li class="sub"><button><svg width="24" height="24"><use href="#win"/></svg>窗(C)</button></li>
              <li class="sub"><button><svg width="24" height="24"><use href="#doorwin"/></svg>门联窗(A)</button></li>
              <li class="sub"><button><svg width="24" height="24"><use href="#hole"/></svg>墙洞(D)</button></li>
              <li class="sub"><button><svg width="24" height="24"><use href="#strip"/></svg>带形窗(C)</button></li>
              <li class="sub"><button><svg width="24" height="24"><use href="#striphole"/></svg>带形洞(D)</button></li>
              <li class="sub"><button><svg width="24" height="24"><use href="#bay"/></svg>飘窗(X)</button></li>
              <li class="sub"><button><svg width="24" height="24"><use href="#dormer"/></svg>老虎窗</button></li>
              <li class="sub"><button><svg width="24" height="24"><use href="#lintel"/></svg>过梁(G)</button></li>
              <li class="sub"><button><svg width="24" height="24"><use href="#niche"/></svg>壁龛(I)</button></li>
              <li>梁</li><li>板</li><li>装配式</li><li>空心楼盖</li><li>楼梯</li><li>装修</li>
            </ul>
            <div class="pe-1 pt-4"><div class="thumb-v" style="height:82%"></div></div>
          </div>
          <div class="pb-2"><div class="thumb-h rounded-start-0" style="width:62%"></div></div>
        </div>
      </section>
      <!-- component list and properties -->
      <section class="col-list flex-shrink-0 d-flex flex-column">
        <div class="band flex-shrink-0"></div>
        <div class="pane-head flex-shrink-0">构件列表</div>
        <div class="tools pane pane-tools d-flex align-items-center flex-shrink-0">
          <button><svg width="24" height="24"><use href="#newdoc"/></svg>新建<svg class="drop" width="10" height="6"><use href="#arrow"/></svg></button>
          <button><svg width="24" height="24"><use href="#copy"/></svg>复制</button>
          <button><svg width="24" height="24"><use href="#del"/></svg>删除</button>
        </div>
        <div class="pane list-pane flex-shrink-0">
          <div class="find d-flex align-items-center justify-content-between">
            <input type="text" placeholder="搜索构件..." aria-label="搜索构件">
            <svg class="me-2" width="18" height="18" viewBox="0 0 18 18"><circle cx="8" cy="7" r="5" fill="none" stroke="#3d8fd6" stroke-width="2"/><path d="M11 11l5 5" stroke="#3d8fd6" stroke-width="3"/></svg>
          </div>
          <div class="d-flex">
            <div class="flex-fill">
              <div class="root-item d-flex align-items-center"><svg width="12" height="10" viewBox="0 0 12 10"><path d="M11 0v9H1z" fill="#333"/></svg>门</div>
              <ul class="items">
                <li><button class="picked">MM0824</button></li><li><button>MM0924</button></li><li><button>MM1024</button></li><li><button>MM1024b</button></li><li><button>MM1224</button></li><li><button>MM1524</button></li><li><button>MM1524a</button></li><li><button>MM2024</button></li>
              </ul>
            </div>
            <div class="pt-4 pe-1"><div class="thumb-v" style="height:76px"></div></div>
          </div>
        </div>
        <div class="band lower flex-shrink-0"></div>
        <div class="pane-head flex-shrink-0">属性列表</div>
        <div class="pane flex-fill minh overflow-hidden d-flex mb-1">
          <table class="grid props flex-shrink-0" style="width:379px">
            <colgroup><col style="width:33px"><col style="width:151px"><col style="width:134px"><col></colgroup>
            <thead><tr><th></th><th>属性名称</th><th>属性值</th><th>附加</th></tr></thead>
            <tbody>
              <tr><th>1</th><td class="k">名称</td><td>MM0824</td><td class="tick"></td></tr>
              <tr><th>2</th><td class="k">洞口宽度(mm)</td><td>800</td><td class="tick"><input type="checkbox" aria-label="洞口宽度"></td></tr>
              <tr><th>3</th><td class="k">洞口高度(mm)</td><td>2400</td><td class="tick"><input type="checkbox" aria-label="洞口高度"></td></tr>
              <tr><th>4</th><td>离地高度(mm)</td><td>-3</td><td class="tick"><input type="checkbox" aria-label="离地高度"></td></tr>
              <tr><th>5</th><td class="k">框厚(mm)</td><td>60</td><td class="tick"><input type="checkbox" aria-label="框厚"></td></tr>
              <tr><th>6</th><td>立樘距离(mm)</td><td>0</td><td class="tick"><input type="checkbox" aria-label="立樘距离"></td></tr>
              <tr><th>7</th><td class="k">洞口面积(m²)</td><td class="off">1.92</td><td class="tick"><input type="checkbox" aria-label="洞口面积"></td></tr>
              <tr><th>8</th><td class="k">框外围面积(m²)</td><td class="off">(1.92)</td><td class="tick"><input type="checkbox" aria-label="框外围面积"></td></tr>
              <tr><th>9</th><td class="k">框上下扣尺寸(...</td><td>0</td><td class="tick"><input type="checkbox" aria-label="框上下扣尺寸"></td></tr>
              <tr><th>10</th><td class="k">框左右扣尺寸(...</td><td>0</td><td class="tick"><input type="checkbox" aria-label="框左右扣尺寸"></td></tr>
              <tr><th>11</th><td>是否随墙变斜</td><td>否</td><td class="tick"><input type="checkbox" aria-label="是否随墙变斜"></td></tr>
            </tbody>
          </table>
          <div class="flex-fill d-flex justify-content-center" style="padding-top:20px"><div class="thumb-v" style="height:214px"></div></div>
        </div>
      </section>
      <!-- component method -->
      <section class="flex-fill minw d-flex flex-column">
        <div class="band flex-shrink-0"></div>
        <div class="pane-head flex-shrink-0">构件做法</div>
        <div class="tools pane pane-tools right-tools d-flex align-items-center flex-shrink-0">
          <button><svg width="24" height="24"><use href="#addlist"/></svg>添加清单</button>
          <button><svg width="24" height="24"><use href="#addquota"/></svg>添加定额</button>
          <button><svg width="24" height="24"><use href="#del"/></svg>删除</button>
          <button><svg width="24" height="24"><use href="#query"/></svg>查询<svg class="drop" width="10" height="6"><use href="#arrow"/></svg></button>
          <button><svg width="24" height="24"><use href="#feat"/></svg>项目特征</button>
          <button><svg width="20" height="24"><use href="#fx"/></svg>换算<svg class="drop" width="10" height="6"><use href="#arrow"/></svg></button>
          <button><svg width="24" height="24"><use href="#brush"/></svg>做法刷</button>
          <button><svg width="24" height="24"><use href="#docfind"/></svg>做法查询</button>
          <button><svg width="24" height="24"><use href="#docpen"/></svg>提取做法</button>
          <button><svg width="24" height="24"><use href="#auto"/></svg>当前构件自动套做法</button>
          <button class="ms-auto me-1" aria-label="更多"><svg width="12" height="8" viewBox="0 0 12 8"><path d="M0 0l5 4-5 4zM6 0l5 4-5 4z" fill="#666"/></svg></button>
        </div>
        <div class="pane bill-pane flex-shrink-0 d-flex flex-column">
          <table class="grid bill">
            <colgroup><col style="width:32px"><col style="width:166px"><col style="width:69px"><col style="width:302px"><col style="width:301px"><col style="width:69px"><col style="width:152px"><col></colgroup>
            <thead><tr><th></th><th>编码</th><th>类别</th><th class="hot">名称</th><th>项目特征</th><th>单位</th><th>工程量表达式</th><th class="text-end">表达式说明</th></tr></thead>
            <tbody>
              <tr class="line1"><th>1</th><td><div class="d-flex align-items-center gap-2"><svg width="18" height="96" viewBox="0 0 18 96"><rect x="3" y="41" width="13" height="14" rx="2" fill="#fff" stroke="#777"/><path d="M6 48h7" stroke="#222" stroke-width="2"/><path d="M10 56v41" stroke="#ccc"/></svg><span class="lat">020401003</span></div></td><td class="text-center p-0">项</td><td>实木装饰门</td><td><span class="lat">1.</span>门类型<span class="lat">:</span>单扇门<br><span class="lat">2.</span>框截面尺寸、单扇面积<span class="lat">:800*240</span><br><span class="lat">3.</span>骨架材料种类<span class="lat">:</span>水曲柳<br><span class="lat">4.</span>面层材料品种、规格、品牌、颜<br>色<span class="lat">:</span>壁纸</td><td class="text-center p-0">樘</td><td><span class="lat">SL</span></td><td class="border-end-0"><span class="lat">SL&lt;</span>数量<span class="lat">&gt;</span></td></tr>
              <tr class="line2"><th class="hot">2</th><td><div class="d-flex align-items-center"><svg width="42" height="32" viewBox="0 0 42 32"><path d="M10 0v16h24" fill="none" stroke="#ccc"/></svg><span class="lat">B4-97</span></div></td><td class="text-center p-0">借</td><td class="editing">成品木门<span class="lat">(</span>单扇<span class="lat">)</span>安装</td><td></td><td class="text-center p-0">樘</td><td><span class="lat">SL</span></td><td class="border-end-0"><span class="lat">SL&lt;</span>数量<span class="lat">&gt;</span></td></tr>
            </tbody>
          </table>
          <div class="mt-auto"><div class="thumb-h bill-thumb"></div></div>
        </div>
        <div class="tabs d-flex align-items-end flex-shrink-0" role="tablist">
          <button role="tab">查询匹配清单<svg width="13" height="12"><use href="#close"/></svg></button>
          <button role="tab">查询匹配定额<svg width="13" height="12"><use href="#close"/></svg></button>
          <button role="tab">查询外部清单<svg width="13" height="12"><use href="#close"/></svg></button>
          <button role="tab">查询清单库<svg width="13" height="12"><use href="#close"/></svg></button>
          <button role="tab">查询定额库<svg width="13" height="12"><use href="#close"/></svg></button>
          <button role="tab" class="now">项目特征<svg width="13" height="12" color="#444"><use href="#close"/></svg></button>
          <button role="tab">标准换算<svg width="13" height="12"><use href="#close"/></svg></button>
        </div>
        <div class="flex-fill minh d-flex">
          <div class="pane flex-fill minw">
            <table class="grid feature"><colgroup><col style="width:303px"><col style="width:301px"><col></colgroup><thead><tr><th>特征</th><th>特征值</th><th>输出</th></tr></thead></table>
          </div>
          <form class="form-side bg-white ms-2 flex-shrink-0 border-bottom">
            <div class="d-flex gap-2"><button type="button" class="apply">应用规则到所选清单</button><button type="button" class="apply">应用规则到全部清单</button></div>
            <div class="form-rows d-flex flex-column">
              <div class="d-flex align-items-center justify-content-between"><label for="pos">添加位置:</label><select id="pos" class="form-select pick caret"><option>添加到项目特征列</option></select></div>
              <div class="d-flex align-items-center justify-content-between"><label for="fmt">显示格式:</label><select id="fmt" class="form-select pick caret"><option>换行</option></select></div>
              <div class="d-flex align-items-center justify-content-between"><label for="gen">特征生成方式:</label><select id="gen" class="form-select pick caret"><option>项目特征：项目特征值</option></select></div>
              <div class="d-flex align-items-center justify-content-between"><label for="seq">序号选项:</label><select id="seq" class="form-select pick caret"><option>1.(数字)</option></select></div>
            </div>
          </form>
        </div>
        <div class="grip d-flex justify-content-end align-items-center flex-shrink-0"><svg width="16" height="14" viewBox="0 0 16 14"><path d="M10 1h3v3h-3zM5 6h3v3H5zM10 6h3v3h-3zM0 11h3v3H0zM5 11h3v3H5zM10 11h3v3h-3z" fill="#666"/></svg></div>
      </section>
    </div>
  </div>
  <div class="handle position-absolute"><div></div></div>
</div>
</body>
</html>
